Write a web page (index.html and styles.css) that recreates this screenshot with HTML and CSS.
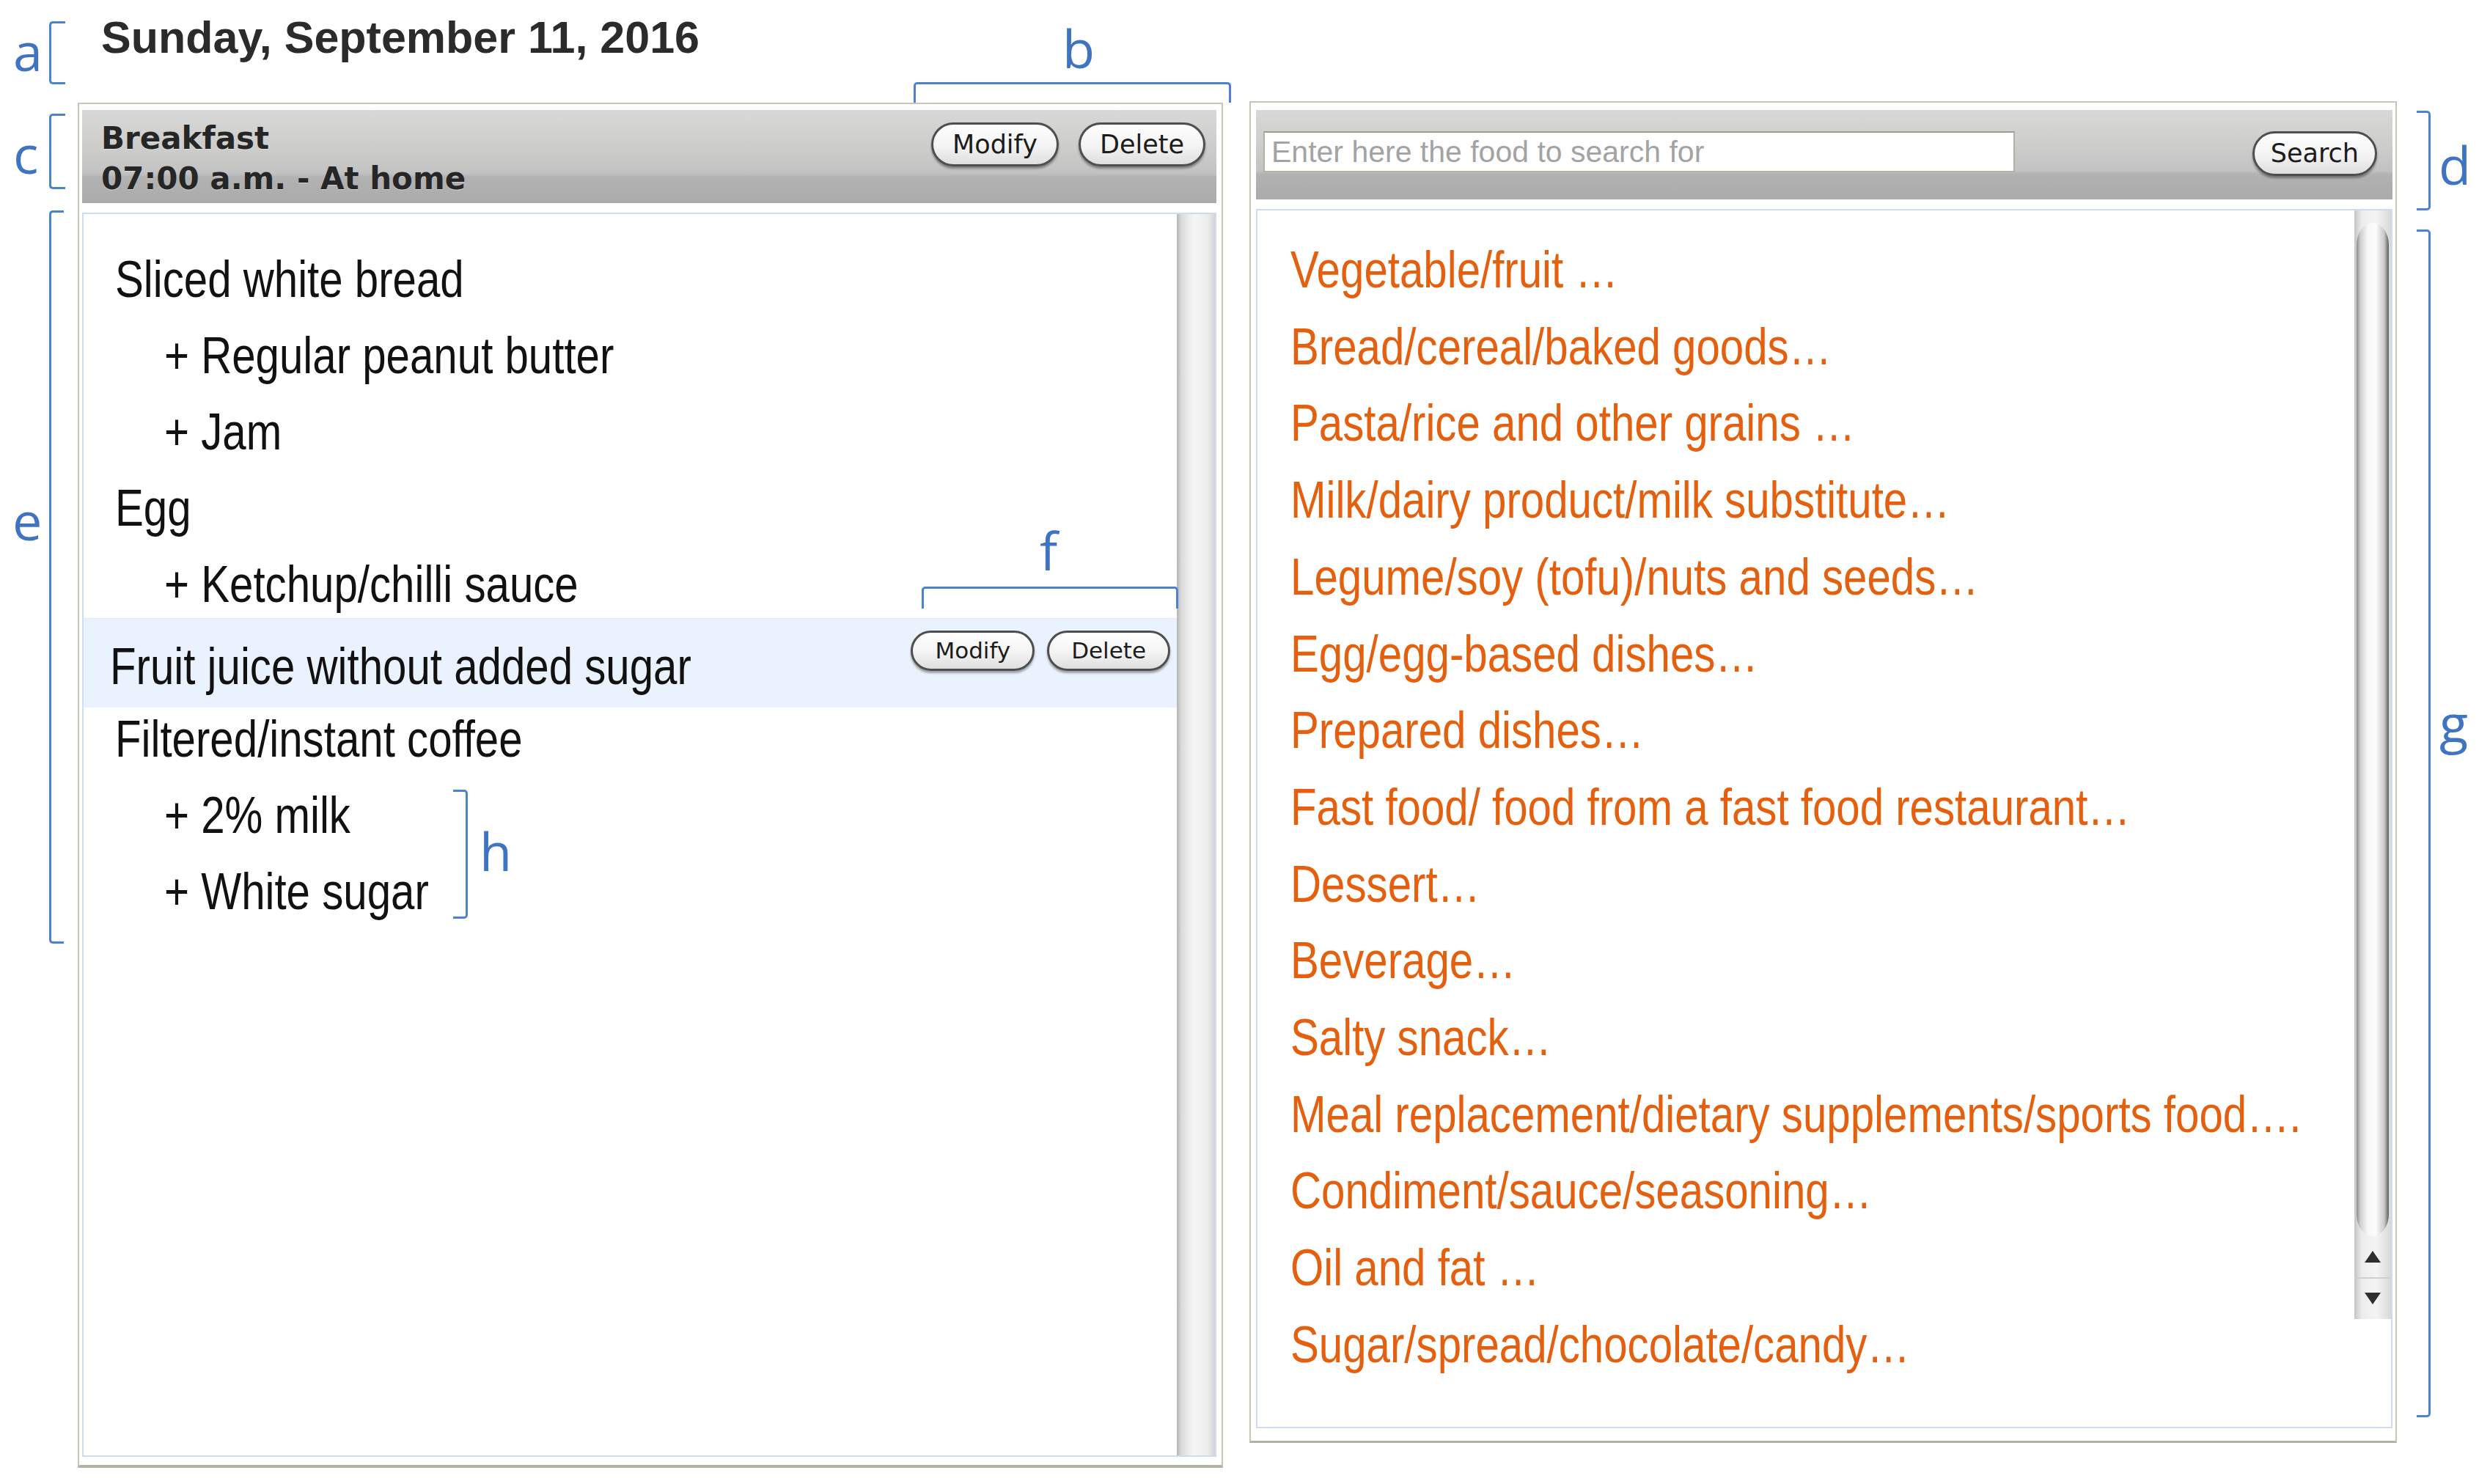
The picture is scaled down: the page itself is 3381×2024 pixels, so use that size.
FILE: index.html
```html
<!DOCTYPE html>
<html>
<head>
<meta charset="UTF-8">
<title>Meal diary</title>
<link rel="stylesheet" href="styles.css">
</head>
<body>
<div class="figure">
  <h1 class="date">Sunday, September 11, 2016</h1>

  <div class="panels">
    <!-- the meal being recorded -->
    <div class="panel meal">
      <div class="bar">
        <div class="meal-title">
          <div>Breakfast</div>
          <div>07:00 a.m. - At home</div>
        </div>
        <div class="actions">
          <button class="btn">Modify</button>
          <button class="btn">Delete</button>
        </div>
      </div>
      <div class="box">
        <ul class="entries">
          <li><span class="t">Sliced white bread</span></li>
          <li class="sub"><span class="t">+ Regular peanut butter</span></li>
          <li class="sub"><span class="t">+ Jam</span></li>
          <li><span class="t">Egg</span></li>
          <li class="sub"><span class="t">+ Ketchup/chilli sauce</span></li>
          <li class="picked">
            <span class="t">Fruit juice without added sugar</span>
            <span class="actions">
              <button class="btn small">Modify</button>
              <button class="btn small">Delete</button>
            </span>
          </li>
          <li><span class="t">Filtered/instant coffee</span></li>
          <li class="sub"><span class="t">+ 2% milk</span></li>
          <li class="sub"><span class="t">+ White sugar</span></li>
        </ul>
        <div class="track"></div>
      </div>
    </div>

    <!-- food search -->
    <div class="panel search">
      <div class="bar search-bar">
        <input class="query" type="text" placeholder="Enter here the food to search for">
        <button class="btn">Search</button>
      </div>
      <div class="box results">
        <ul class="groups">
          <li>Vegetable/fruit …</li>
          <li>Bread/cereal/baked goods…</li>
          <li>Pasta/rice and other grains …</li>
          <li>Milk/dairy product/milk substitute…</li>
          <li>Legume/soy (tofu)/nuts and seeds…</li>
          <li>Egg/egg-based dishes…</li>
          <li>Prepared dishes…</li>
          <li>Fast food/ food from a fast food restaurant…</li>
          <li>Dessert…</li>
          <li>Beverage…</li>
          <li>Salty snack…</li>
          <li>Meal replacement/dietary supplements/sports food….</li>
          <li>Condiment/sauce/seasoning…</li>
          <li>Oil and fat …</li>
          <li>Sugar/spread/chocolate/candy…</li>
        </ul>
        <div class="vscroll">
          <div class="cap"></div>
          <div class="thumb"></div>
          <div class="arrow"><svg width="24" height="18" viewBox="0 0 24 18"><path d="M12 1 L23 17 L1 17 Z" fill="#2e2e2e"/></svg></div>
          <div class="arrow"><svg width="24" height="18" viewBox="0 0 24 18"><path d="M1 1 L23 1 L12 17 Z" fill="#2e2e2e"/></svg></div>
        </div>
      </div>
    </div>
  </div>

  <!-- figure annotations -->
  <span class="brk left brk-a"></span><span class="mark mark-a">a</span>
  <span class="brk top brk-b"></span><span class="mark mark-b">b</span>
  <span class="brk left brk-c"></span><span class="mark mark-c">c</span>
  <span class="brk right brk-d"></span><span class="mark mark-d">d</span>
  <span class="brk left brk-e"></span><span class="mark mark-e">e</span>
  <span class="brk top brk-f"></span><span class="mark mark-f">f</span>
  <span class="brk right brk-g"></span><span class="mark mark-g">g</span>
  <span class="brk right brk-h"></span><span class="mark mark-h">h</span>
</div>
</body>
</html>
```

FILE: styles.css
```css
* {
    box-sizing: border-box;
}
body {
    margin: 0;
    background: #fff;
}
.figure {
    position: relative;
    width: 3381px;
    height: 2024px;
}
.date {
    margin: 0;
    height: 140px;
    padding: 11px 0 0 138px;
    font: bold 61px/80px "Liberation Sans", Arial, sans-serif;
    color: #2b2b2b;
}
.panels {
    display: flex;
    align-items: flex-start;
    gap: 36px;
    padding-left: 106px;
}

/* the two framed windows */
.panel {
    display: flex;
    flex-direction: column;
    border: 2px solid #c6c6b6;
    background: #fff;
}
.meal {
    width: 1562px;
    height: 1862px;
    border-bottom: 4px solid #b3b3a3;
    padding: 8px 7px 11px 4px;
}
.search {
    width: 1565px;
    height: 1830px;
    margin-top: -2px;
    border-bottom: 3px solid #b3b3a3;
    padding: 10px 4px 17px 7px;
}
.bar {
    flex: none;
    display: flex;
    justify-content: space-between;
    align-items: flex-start;
    margin-bottom: 13px;
    background: linear-gradient(to bottom, #d8d8d6 0%, #cbcbca 45%, #c2c2c2 68%, #b2b2b2 72%, #ababab 100%);
}
.meal .bar {
    height: 127px;
    padding: 11px 15px 0 26px;
}
.search-bar {
    height: 122px;
    padding: 29px 21px 0 10px;
}
.meal-title {
    font: bold 42px/55px "DejaVu Sans", Verdana, sans-serif;
    color: #262626;
    text-shadow: 0 1px 0 rgba(255, 255, 255, .45);
}
.actions {
    display: flex;
    gap: 27px;
    margin-top: 6px;
}
.btn {
    margin: 0;
    padding: 0 26px;
    font: 35px/54px "DejaVu Sans", Verdana, sans-serif;
    color: #1c1c1c;
    background: linear-gradient(to bottom, #ffffff 0%, #f3f3f3 55%, #dedede 100%);
    border: 3px solid #4e4e4e;
    border-radius: 40px;
    box-shadow: 0 3px 3px rgba(0, 0, 0, .35);
}
.btn.small {
    padding: 0 30px;
    font-size: 31px;
    line-height: 49px;
}
.search-bar .btn {
    padding: 0 22px;
    line-height: 55px;
}

/* list boxes; the food names are set narrow, as Arial Narrow */
.box {
    flex: 1;
    min-height: 0;
    display: flex;
    border: 2px solid #cfdcf0;
}
.entries {
    flex: 1;
    min-width: 0;
    list-style: none;
    margin: 0;
    padding: 37px 0 0;
    font: 71px/104px "Liberation Sans", Arial, sans-serif;
    color: #111;
}
.entries li {
    padding-left: 43px;
    white-space: nowrap;
}
.entries .t {
    display: inline-block;
    transform: scaleX(.82);
    transform-origin: 0 50%;
}
.entries .sub {
    padding-left: 110px;
}
.entries .picked {
    display: flex;
    justify-content: space-between;
    align-items: flex-start;
    height: 122px;
    margin: -6px 0 -9px;
    padding: 8px 9px 0 36px;
    line-height: 114px;
    background: #eaf3fd;
    border-top: 1px solid #e2edf9;
}
.picked .actions {
    gap: 17px;
    margin-top: 8px;
}
.track {
    flex: none;
    width: 52px;
    background: linear-gradient(to right, #b4b4b4 0%, #dcdcdc 12%, #f6f6f6 45%, #ededed 80%, #d4d4d4 100%);
}

/* search side */
.query {
    width: 1025px;
    height: 56px;
    padding: 0 0 0 9px;
    font: 41px "Liberation Sans", Arial, sans-serif;
    color: #333;
    background: #fff;
    border: 2px solid #b3b3a0;
    border-top-color: #9c9c8c;
    outline: none;
}
.query::placeholder {
    color: #a3a3a3;
}
.groups {
    flex: 1;
    min-width: 0;
    list-style: none;
    margin: 0;
    padding: 29px 0 0 45px;
    font: 71px/104.7px "Liberation Sans", Arial, sans-serif;
    color: #e5600e;
    white-space: nowrap;
}
.groups li {
    transform: scaleX(.82);
    transform-origin: 0 50%;
}
.vscroll {
    flex: none;
    display: flex;
    flex-direction: column;
    width: 50px;
    height: 1512px;
    background: linear-gradient(to right, #c4c4c4 0%, #ececec 20%, #f4f4f4 60%, #d8d8d8 100%);
}
.vscroll .cap {
    height: 17px;
}
.vscroll .thumb {
    height: 1382px;
    margin: 0 3px;
    border-radius: 22px / 30px;
    background: linear-gradient(to right, #8a8a8a 0%, #cfcfcf 12%, #f8f8f8 35%, #fcfcfc 60%, #c8c8c8 86%, #5c5c5c 100%);
}
.vscroll .arrow {
    height: 56px;
    display: flex;
    align-items: center;
    justify-content: center;
}
.vscroll .arrow + .arrow {
    border-top: 2px solid #cfcfcf;
}

/* blue annotation letters and brackets */
.mark {
    position: absolute;
    font: 72px/72px "Open Sans", sans-serif;
    color: #3f74c2;
}
.brk {
    position: absolute;
    border: 3.5px solid #4d82cc;
}
.brk.left {
    border-right: 0;
    border-radius: 5px 0 0 5px;
}
.brk.right {
    border-left: 0;
    border-radius: 0 5px 5px 0;
}
.brk.top {
    border-bottom: 0;
    border-radius: 5px 5px 0 0;
}
.brk-a { left: 67px; top: 29px; width: 22px; height: 86px; }
.brk-c { left: 67px; top: 155px; width: 22px; height: 103px; }
.brk-e { left: 67px; top: 287px; width: 20px; height: 1000px; }
.brk-b { left: 1246px; top: 112px; width: 433px; height: 28px; }
.brk-f { left: 1257px; top: 800px; width: 350px; height: 30px; }
.brk-d { left: 3296px; top: 151px; width: 19px; height: 136px; }
.brk-g { left: 3296px; top: 313px; width: 19px; height: 1620px; }
.brk-h { left: 618px; top: 1077px; width: 20px; height: 176px; }
.mark-a { left: 18px; top: 33px; }
.mark-b { left: 1449px; top: 29px; }
.mark-c { left: 18px; top: 173px; }
.mark-d { left: 3326px; top: 188px; }
.mark-e { left: 17px; top: 673px; }
.mark-f { left: 1418px; top: 714px; }
.mark-g { left: 3327px; top: 949px; }
.mark-h { left: 654px; top: 1124px; }
```
